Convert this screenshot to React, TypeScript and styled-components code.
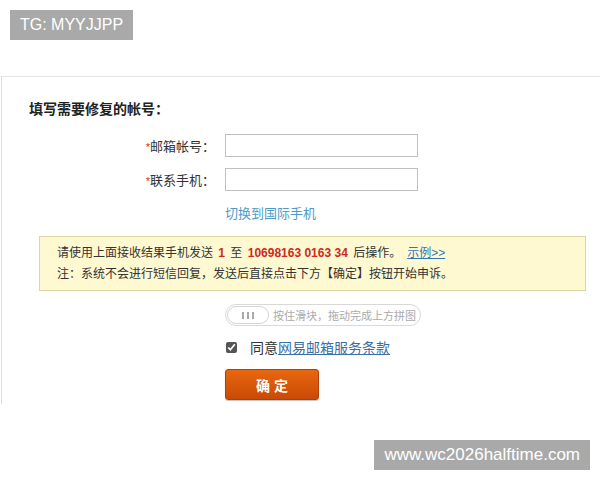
import React from "react";
import styled, { createGlobalStyle } from "styled-components";

const GlobalStyle = createGlobalStyle`
  html, body {
    margin: 0;
    padding: 0;
    background: #fff;
  }
  body {
    width: 600px;
    height: 480px;
    overflow: hidden;
    position: relative;
    font-family: "Liberation Sans", Arial, "Noto Sans CJK SC", sans-serif;
    color: #333;
  }
`;

const Watermark = styled.div<{ $top?: number; $left?: number; $right?: number; $size?: number }>`
  position: absolute;
  top: ${(p) => p.$top ?? 10}px;
  ${(p) => (p.$right !== undefined ? `right: ${p.$right}px;` : `left: ${p.$left ?? 10}px;`)}
  background: #a9a9a9;
  color: #fff;
  font-size: ${(p) => p.$size ?? 16}px;
  height: 30px;
  line-height: 30px;
  padding: 0 10px;
  font-family: "Liberation Sans", Arial, sans-serif;
  z-index: 5;
`;

const Page = styled.div`
  padding-top: 76px;
`;

const Panel = styled.div`
  border-top: 1px solid #e6e6e6;
  border-left: 1px solid #dcdcdc;
  margin-left: 1px;
  height: 328px;
  padding: 22px 0 0 27px;
  box-sizing: border-box;
`;

const Heading = styled.h2`
  margin: 0 0 14px;
  font-size: 14px;
  font-weight: bold;
  color: #222;
  line-height: 20px;
`;

const Row = styled.div`
  display: flex;
  align-items: center;
  height: 24px;
  margin-bottom: 10px;
`;

const Label = styled.label`
  width: 186px;
  text-align: right;
  padding-right: 10px;
  font-size: 13px;
  color: #333;
`;

const Star = styled.span`
  color: #c33;
  font-size: 11px;
`;

const Field = styled.input`
  width: 193px;
  height: 23px;
  box-sizing: border-box;
  border: 1px solid #bfbfbf;
  margin: 0;
  padding: 0 4px;
`;

const Indent = styled.div<{ $top?: number }>`
  padding-left: 196px;
  padding-top: ${(p) => p.$top ?? 0}px;
`;

const SwitchLink = styled.a`
  display: block;
  color: #4f9bc8;
  font-size: 13px;
  text-decoration: none;
  line-height: 20px;
`;

const Notice = styled.div`
  margin: 12px 0 0 10px;
  width: 547px;
  box-sizing: border-box;
  height: 55px;
  background: #fff9d2;
  border: 1px solid #dcd6a4;
  padding: 6px 0 0 17px;
  font-size: 12px;
  color: #333;
  line-height: 21px;
`;

const Red = styled.b`
  color: #cc2a1c;
  font-weight: bold;
  padding: 0 2px;
`;

const ExampleLink = styled.a`
  color: #3374b8;
  text-decoration: underline;
  margin-left: 6px;
`;

const Slider = styled.div`
  margin-top: 13px;
  width: 196px;
  height: 22px;
  box-sizing: border-box;
  border: 1px solid #d9d9d9;
  border-radius: 11px;
  display: flex;
  align-items: center;
  padding-left: 1px;
  gap: 4px;
  background: #fff;
`;

const Knob = styled.div`
  width: 42px;
  height: 18px;
  border: 1px solid #d5d5d5;
  border-radius: 9px;
  box-sizing: border-box;
  display: flex;
  align-items: center;
  justify-content: center;
  gap: 3px;
`;

const Tick = styled.span`
  width: 2px;
  height: 7px;
  background: #aaa;
`;

const SliderText = styled.span`
  font-size: 11px;
  color: #aaa;
`;

const Agree = styled.div`
  margin-top: 11px;
  display: flex;
  align-items: center;
  font-size: 14px;
  color: #333;
  height: 20px;
`;

const Check = styled.input`
  margin: 0 13px 0 1px;
  width: 11px;
  height: 11px;
  accent-color: #555;
`;

const TermsLink = styled.a`
  color: #3a6ea5;
  text-decoration: underline;
`;

const Submit = styled.button`
  margin-top: 12px;
  width: 94px;
  height: 31px;
  border: 1px solid #b04008;
  border-radius: 3px;
  background: linear-gradient(#e8670f, #c94a06);
  color: #fff;
  font-size: 14px;
  font-weight: bold;
  letter-spacing: 4px;
  padding: 0 0 0 4px;
  box-shadow: 0 1px 1px rgba(0, 0, 0, 0.25);
  font-family: "Noto Sans CJK SC", sans-serif;
`;

export default function App() {
  return (
    <>
      <GlobalStyle />
      <Watermark $top={10} $left={10} $size={16}>TG: MYYJJPP</Watermark>
      <Watermark $top={440} $right={10} $size={17}>www.wc2026halftime.com</Watermark>
      <Page>
        <Panel>
          <Heading>填写需要修复的帐号：</Heading>
          <Row>
            <Label><Star>*</Star>邮箱帐号：</Label>
            <Field />
          </Row>
          <Row>
            <Label><Star>*</Star>联系手机：</Label>
            <Field />
          </Row>
          <Indent $top={3}>
            <SwitchLink>切换到国际手机</SwitchLink>
          </Indent>
          <Notice>
            <div>
              请使用上面接收结果手机发送 <Red>1</Red> 至 <Red>10698163 0163 34</Red> 后操作。
              <ExampleLink>示例&gt;&gt;</ExampleLink>
            </div>
            <div>注：系统不会进行短信回复，发送后直接点击下方【确定】按钮开始申诉。</div>
          </Notice>
          <Indent>
            <Slider>
              <Knob>
                <Tick />
                <Tick />
                <Tick />
              </Knob>
              <SliderText>按住滑块，拖动完成上方拼图</SliderText>
            </Slider>
            <Agree>
              <Check type="checkbox" defaultChecked />
              同意<TermsLink>网易邮箱服务条款</TermsLink>
            </Agree>
            <Submit>确定</Submit>
          </Indent>
        </Panel>
      </Page>
    </>
  );
}
